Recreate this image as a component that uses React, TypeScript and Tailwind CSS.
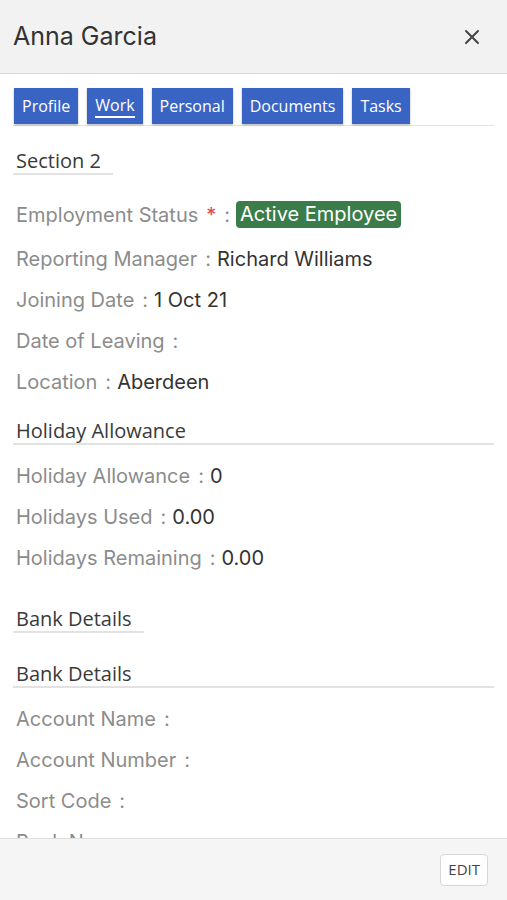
import React from "react";

type Field = { label: string; value?: string; required?: boolean; badge?: boolean };

const work: Field[] = [
  { label: "Employment Status", value: "Active Employee", required: true, badge: true },
  { label: "Reporting Manager", value: "Richard Williams" },
  { label: "Joining Date", value: "1 Oct 21" },
  { label: "Date of Leaving" },
  { label: "Location", value: "Aberdeen" },
];

const holiday: Field[] = [
  { label: "Holiday Allowance", value: "0" },
  { label: "Holidays Used", value: "0.00" },
  { label: "Holidays Remaining", value: "0.00" },
];

const bank: Field[] = [
  { label: "Account Name" },
  { label: "Account Number" },
  { label: "Sort Code" },
  { label: "Bank Name" },
];

const tabs = ["Profile", "Work", "Personal", "Documents", "Tasks"];

function Row({ label, value, required, badge }: Field) {
  return (
    <div
      className={`flex items-center text-[20px] font-['Inter',sans-serif] ${
        badge ? "h-[47px]" : "h-[41px]"
      }`}
    >
      <span className="text-[#8c8c8c]">{label}</span>
      {required && <span className="text-[#e0444c] ml-2">*</span>}
      <span className="text-[#8c8c8c] ml-2 mr-1.5">:</span>
      {value &&
        (badge ? (
          <span className="bg-[#3a7d4b] text-white rounded px-1 leading-[27px]">{value}</span>
        ) : (
          <span className="text-[#333]">{value}</span>
        ))}
    </div>
  );
}

function Heading({ title, full }: { title: string; full?: boolean }) {
  return (
    <div
      className={`pl-[3px] leading-[24px] border-b-2 border-[#e2e2e2] text-[20px] text-[#3a3a3a] font-['Open_Sans',sans-serif] ${
        full ? "w-full" : "w-fit pr-3"
      }`}
    >
      {title}
    </div>
  );
}

export default function App() {
  return (
    <div className="w-[507px] h-[900px] flex flex-col bg-white overflow-hidden">
      <div className="h-[74px] shrink-0 bg-[#f2f2f2] border-b border-[#d9d9d9] flex items-center justify-between pl-[13px] pr-[27px]">
        <span className="text-[25px] text-[#333] font-['Inter',sans-serif]">Anna Garcia</span>
        <svg width="16" height="16" viewBox="0 0 16 16" stroke="#444" strokeWidth="2" strokeLinecap="round">
          <path d="M2 2L14 14M14 2L2 14" />
        </svg>
      </div>

      <div className="flex-1 overflow-hidden px-[13px]">
        <div className="flex gap-[9px] pt-[14px] pb-px pl-px border-b border-[#e2e2e2]">
          {tabs.map((t) => (
            <div
              key={t}
              className="h-[36px] px-[8px] flex items-center bg-[#3a64c4] text-white text-[16px] font-['Open_Sans',sans-serif] shadow-[0_1px_2px_rgba(0,0,0,0.3)]"
            >
              <span className={t === "Work" ? "border-b-2 border-white leading-[22px]" : ""}>{t}</span>
            </div>
          ))}
        </div>

        <div className="pt-[23px]">
          <Heading title="Section 2" />
          <div className="pl-[3px] pt-[16px]">
            {work.map((f) => (
              <Row key={f.label} {...f} />
            ))}
          </div>
        </div>

        <div className="pt-[17px]">
          <Heading title="Holiday Allowance" full />
          <div className="pl-[3px] pt-[10px]">
            {holiday.map((f) => (
              <Row key={f.label} {...f} />
            ))}
          </div>
        </div>

        <div className="pt-[29px]">
          <Heading title="Bank Details" />
        </div>
        <div className="pt-[29px]">
          <Heading title="Bank Details" full />
          <div className="pl-[3px] pt-[10px]">
            {bank.map((f) => (
              <Row key={f.label} {...f} />
            ))}
          </div>
        </div>
      </div>

      <div className="h-[62px] shrink-0 bg-[#f5f5f5] border-t border-[#e0e0e0] flex items-center justify-end pr-[19px]">
        <button className="h-[32px] px-[7px] bg-white border border-[#d6d6d6] rounded-sm text-[15px] text-[#444] font-['Open_Sans',sans-serif]">
          EDIT
        </button>
      </div>
    </div>
  );
}
